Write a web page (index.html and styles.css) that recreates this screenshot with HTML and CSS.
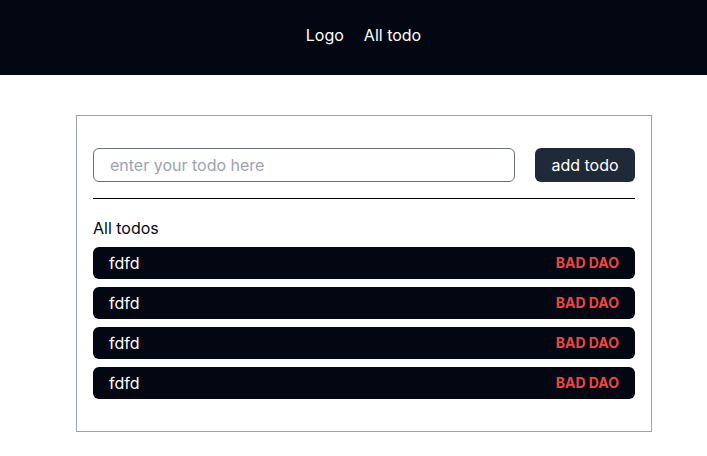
FILE: index.html
```html
<!DOCTYPE html>
<html>
<head>
<meta charset="utf-8">
<link rel="stylesheet" href="styles.css">
</head>
<body>
<header class="header">
  <nav class="nav">
    <span class="nav-item">Logo</span>
    <span class="nav-item">All todo</span>
  </nav>
</header>
<main class="card">
  <form class="add-form">
    <input class="todo-input" type="text" placeholder="enter your todo here">
    <button class="add-btn" type="button">add todo</button>
  </form>
  <hr class="divider">
  <h2 class="list-title">All todos</h2>
  <ul class="todo-list">
    <li class="todo-item"><span class="todo-text">fdfd</span><span class="todo-tag">BAD DAO</span></li>
    <li class="todo-item"><span class="todo-text">fdfd</span><span class="todo-tag">BAD DAO</span></li>
    <li class="todo-item"><span class="todo-text">fdfd</span><span class="todo-tag">BAD DAO</span></li>
    <li class="todo-item"><span class="todo-text">fdfd</span><span class="todo-tag">BAD DAO</span></li>
  </ul>
</main>
</body>
</html>
```

FILE: styles.css
```css
* { box-sizing: border-box; }
html, body { margin: 0; padding: 0; }
body {
  font-family: Inter, "Noto Sans", sans-serif;
  font-size: 16px;
  line-height: 24px;
  color: #030712;
  background: #ffffff;
}
.header {
  height: 75px;
  background: #030712;
  display: flex;
  align-items: center;
  justify-content: center;
  padding-left: 20px;
  padding-bottom: 6px;
}
.nav {
  display: flex;
  gap: 20px;
}
.nav-item {
  color: #ffffff;
  font-size: 16px;
}
.card {
  width: 576px;
  margin: 40px 0 0 76px;
  border: 1px solid #9ca3af;
  padding: 32px 16px 32px 16px;
}
.add-form {
  display: flex;
  gap: 20px;
  margin: 0;
}
.todo-input {
  flex: 1;
  height: 34px;
  border: 1px solid #6b7280;
  border-radius: 6px;
  padding: 0 16px;
  font-family: inherit;
  font-size: 16px;
  color: #030712;
  outline: none;
}
.todo-input::placeholder { color: #9ca3af; }
.add-btn {
  width: 100px;
  height: 34px;
  border: none;
  border-radius: 6px;
  background: #1f2937;
  color: #ffffff;
  font-family: inherit;
  font-size: 16px;
  padding: 0;
}
.divider {
  margin: 16px 0 0 0;
  border: none;
  border-top: 1px solid #000000;
  height: 0;
}
.list-title {
  margin: 17px 0 7px 0;
  font-size: 16px;
  font-weight: 400;
  line-height: 24px;
  color: #030712;
}
.todo-list {
  list-style: none;
  margin: 0;
  padding: 0;
  display: flex;
  flex-direction: column;
  gap: 8px;
}
.todo-item {
  height: 32px;
  background: #030712;
  border-radius: 6px;
  display: flex;
  align-items: center;
  justify-content: space-between;
  padding: 0 16px;
}
.todo-text { color: #ffffff; font-size: 16px; }
.todo-tag { color: #ef4444; font-size: 14px; font-weight: 700; }
```
